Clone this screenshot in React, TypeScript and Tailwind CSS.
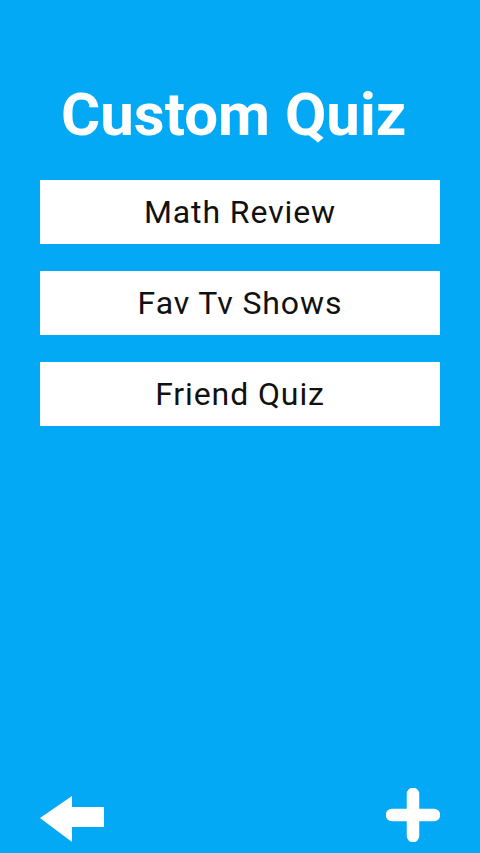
const quizzes = ['Math Review', 'Fav Tv Shows', 'Friend Quiz'];

function ArrowLeftIcon() {
  return (
    <svg width="64" height="46" viewBox="0 0 64 46" className="block">
      <path d="M0 22 L32 0 L32 11 L64 11 L64 31 L32 31 L32 46 Z" fill="white" />
    </svg>
  );
}

function PlusIcon() {
  return (
    <svg width="54" height="54" viewBox="0 0 54 54" className="block">
      <path
        d="M27 6 V48 M6 27 H48"
        stroke="white"
        strokeWidth="12.5"
        strokeLinecap="round"
        fill="none"
      />
    </svg>
  );
}

export default function App() {
  return (
    <div className="w-[480px] h-[853px] bg-[#03a9f4] flex flex-col font-['Roboto',sans-serif]">
      <h1 className="mt-[80px] pl-[61px] text-[60px] leading-[70px] font-bold text-white">
        Custom Quiz
      </h1>
      <div className="mt-[30px] px-[40px] flex flex-col gap-[27px]">
        {quizzes.map((q) => (
          <button
            key={q}
            className="h-[64px] bg-white text-[#111] text-[32px] tracking-[0.9px] flex items-center justify-center"
          >
            {q}
          </button>
        ))}
      </div>
      <div className="mt-auto pl-[40px] pr-[40px] pb-[11px] flex items-end justify-between">
        <ArrowLeftIcon />
        <PlusIcon />
      </div>
    </div>
  );
}
